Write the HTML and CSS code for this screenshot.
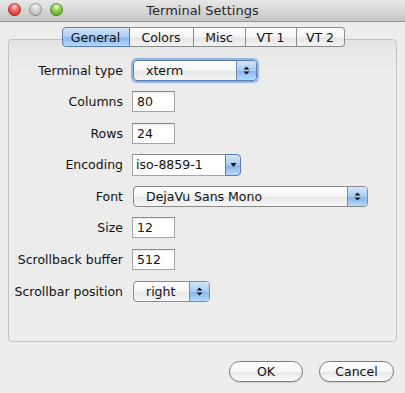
FILE: index.html
```html
<!DOCTYPE html>
<html lang="en">
<head>
  <meta charset="UTF-8" />
  <title>Terminal Settings</title>
  <link rel="stylesheet" href="styles.css">
</head>
<body>
  <div class="window">
    <div class="titlebar">
      <div class="lights">
        <span class="light red"></span>
        <span class="light gray"></span>
        <span class="light green"></span>
      </div>
      <div class="title">Terminal Settings</div>
      <div></div>
    </div>

    <div class="content">
      <div class="tabs">
        <span class="tab selected t-general">General</span>
        <span class="tab t-colors">Colors</span>
        <span class="tab t-misc">Misc</span>
        <span class="tab t-vt1">VT 1</span>
        <span class="tab t-vt2">VT 2</span>
      </div>

      <div class="panel">
        <div class="form">
          <label>Terminal type</label>
          <div class="popup focused w-type">
            <span class="popup-text">xterm</span>
            <span class="arrows"><svg width="7" height="11" viewBox="0 0 7 11"><path d="M3.5 1.5 L6.5 4.5 H0.5Z M3.5 9.5 L6.5 6.5 H0.5Z"/></svg></span>
          </div>

          <label>Columns</label>
          <div class="field">80</div>

          <label>Rows</label>
          <div class="field">24</div>

          <label>Encoding</label>
          <div class="combo">
            <span class="combo-text">iso-8859-1</span>
            <span class="combo-btn"><svg width="7" height="6" viewBox="0 0 7 6"><path d="M0.5 1 H6.5 L3.5 5Z"/></svg></span>
          </div>

          <label>Font</label>
          <div class="popup w-font">
            <span class="popup-text">DejaVu Sans Mono</span>
            <span class="arrows"><svg width="7" height="11" viewBox="0 0 7 11"><path d="M3.5 1.5 L6.5 4.5 H0.5Z M3.5 9.5 L6.5 6.5 H0.5Z"/></svg></span>
          </div>

          <label>Size</label>
          <div class="field">12</div>

          <label>Scrollback buffer</label>
          <div class="field">512</div>

          <label>Scrollbar position</label>
          <div class="popup w-scroll">
            <span class="popup-text">right</span>
            <span class="arrows"><svg width="7" height="11" viewBox="0 0 7 11"><path d="M3.5 1.5 L6.5 4.5 H0.5Z M3.5 9.5 L6.5 6.5 H0.5Z"/></svg></span>
          </div>
        </div>
      </div>

      <div class="buttons">
        <span class="button b-ok">OK</span>
        <span class="button b-cancel">Cancel</span>
      </div>
    </div>
  </div>
</body>
</html>
```

FILE: styles.css
```css
* {
  margin: 0;
  padding: 0;
  box-sizing: border-box;
}

body {
  font-family: 'DejaVu Sans', 'Liberation Sans', sans-serif;
  font-size: 12.5px;
  color: #111;
  background: #ededed;
}

.window {
  width: 405px;
  height: 393px;
  background: #ededed;
}

/* title bar */
.titlebar {
  height: 22px;
  display: grid;
  grid-template-columns: 1fr auto 1fr;
  align-items: center;
  background: linear-gradient(#e8e8e8, #d3d3d3 60%, #c5c5c5);
  border-bottom: 1px solid #959595;
}

.lights {
  display: flex;
  gap: 8px;
  padding-left: 8px;
  padding-bottom: 2px;
}

.light {
  width: 13px;
  height: 13px;
  border-radius: 50%;
  box-shadow: inset 0 0 0 1px rgba(0, 0, 0, 0.25);
}

.light.red {
  background: radial-gradient(circle at 50% 30%, #ffd6d2 0%, #f0685f 35%, #c5221a 90%);
}

.light.gray {
  background: radial-gradient(circle at 50% 30%, #f4f4f4 0%, #d3d3d3 40%, #a9a9a9 95%);
}

.light.green {
  background: radial-gradient(circle at 50% 30%, #e6ffd0 0%, #8fd153 35%, #4c9a1c 90%);
}

.title {
  font-size: 13px;
  color: #2a2a2a;
  padding-bottom: 1px;
}

/* content */
.content {
  padding-top: 5px;
}

.tabs {
  position: relative;
  z-index: 1;
  display: flex;
  justify-content: center;
  height: 20px;
  padding-left: 1px;
}

.tab {
  display: flex;
  align-items: center;
  justify-content: center;
  height: 20px;
  background: linear-gradient(#ffffff, #f4f4f4 50%, #e6e6e6 55%, #f3f3f3);
  border: 1px solid #8c8c8c;
  border-left: none;
  color: #111;
}

.tab:first-child {
  border-left: 1px solid #5a7cb0;
  border-radius: 4px 0 0 4px;
}

.tab:last-child {
  border-radius: 0 4px 4px 0;
}

.tab.selected {
  background: linear-gradient(#d3e6fb, #a9ccf3 50%, #86b8ee 55%, #b4d9fb);
  border-color: #5a7cb0;
}

.t-general { width: 68px; }
.t-colors { width: 64px; }
.t-misc { width: 52px; }
.t-vt1 { width: 51px; }
.t-vt2 { width: 48px; }

.panel {
  margin: -8px 8px 0;
  height: 303px;
  border: 1px solid #c3c3c3;
  border-radius: 4px;
  background: linear-gradient(#e3e3e3, #e9e9e9 14px, #ececec 30px);
  padding-top: 19px;
}

.form {
  display: grid;
  grid-template-columns: 114px auto;
  grid-auto-rows: 22px;
  column-gap: 9px;
  row-gap: 9.6px;
  align-items: center;
  justify-items: start;
}

.form label {
  justify-self: end;
  color: #111;
}

/* text fields */
.field {
  width: 43px;
  height: 21px;
  background: #fff;
  border: 1px solid #a5a5a5;
  border-top-color: #8a8a8a;
  box-shadow: inset 0 1px 1px rgba(0, 0, 0, 0.08);
  padding-left: 4px;
  line-height: 19px;
}

/* popup buttons */
.popup {
  display: flex;
  height: 21px;
  margin-left: 1px;
  border: 1px solid #8a8a8a;
  border-radius: 4px;
  overflow: hidden;
  background: linear-gradient(#ffffff, #f5f5f5 50%, #e8e8e8 55%, #f6f6f6);
}

.popup.focused {
  border-color: #5a7cb0;
  box-shadow: 0 0 1px 2px rgba(110, 160, 225, 0.75);
}

.popup-text {
  flex: 1;
  padding-left: 12px;
  line-height: 19px;
}

.arrows {
  width: 20px;
  display: flex;
  align-items: center;
  justify-content: center;
  border-left: 1px solid #6b8fc4;
  background: linear-gradient(#d3e6fb, #a9ccf3 50%, #86b8ee 55%, #b4d9fb);
}

.arrows svg,
.combo-btn svg {
  fill: #111;
}

.w-type { width: 124px; }
.w-font { width: 235px; }
.w-scroll { width: 77px; }

/* combo box */
.combo {
  display: flex;
  height: 22px;
}

.combo-text {
  width: 93px;
  background: #fff;
  border: 1px solid #a5a5a5;
  border-top-color: #8a8a8a;
  border-right: none;
  padding-left: 3px;
  line-height: 20px;
}

.combo-btn {
  width: 16px;
  display: flex;
  align-items: center;
  justify-content: center;
  border: 1px solid #5a7cb0;
  border-radius: 0 4px 4px 0;
  background: linear-gradient(#d3e6fb, #a9ccf3 50%, #86b8ee 55%, #b4d9fb);
}

/* dialog buttons */
.buttons {
  display: flex;
  justify-content: flex-end;
  gap: 16px;
  padding-right: 11px;
  margin-top: 19px;
}

.button {
  display: flex;
  align-items: center;
  justify-content: center;
  height: 21px;
  border: 1px solid #7b7b7b;
  border-radius: 11px;
  background: linear-gradient(#ffffff, #f6f6f6 50%, #e9e9e9 55%, #fafafa);
  box-shadow: 0 1px 1px rgba(0, 0, 0, 0.12);
  color: #111;
}

.b-ok { width: 74px; }
.b-cancel { width: 75px; }
```
